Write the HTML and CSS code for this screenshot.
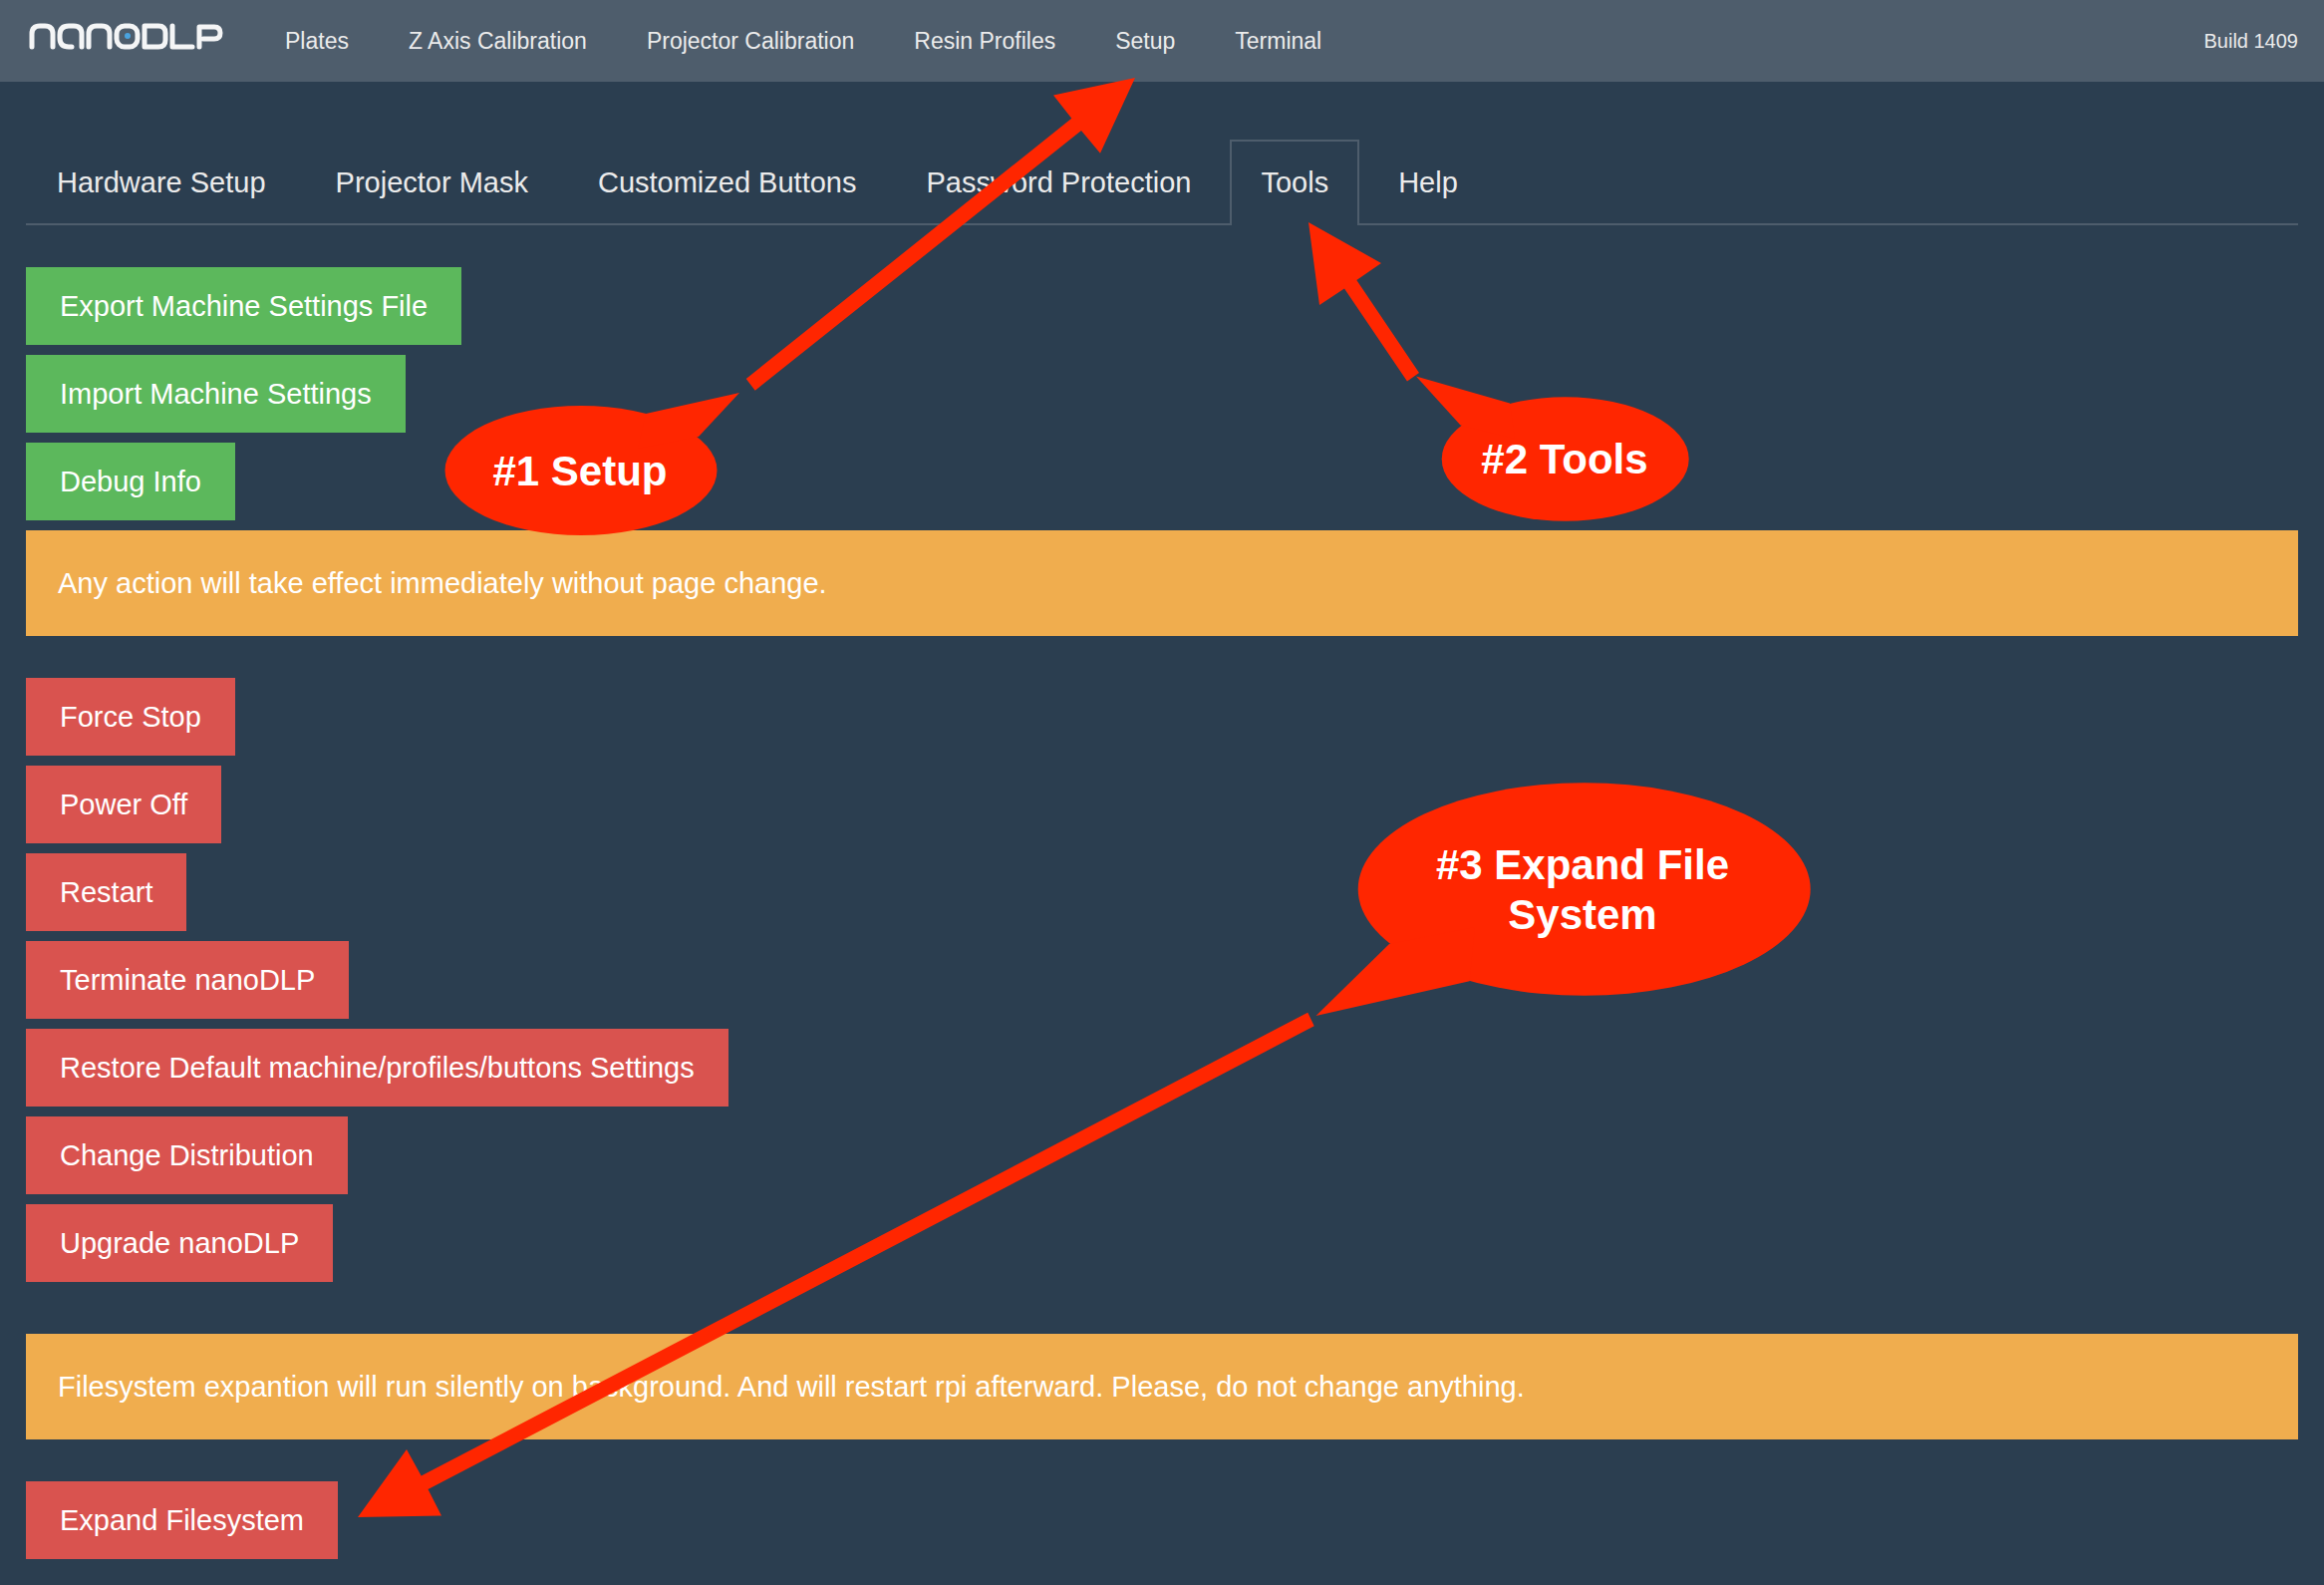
FILE: index.html
```html
<!DOCTYPE html>
<html lang="en">
<head>
<meta charset="utf-8">
<title>nanoDLP - Setup</title>
<link rel="stylesheet" href="styles.css">
</head>
<body>
<header class="navbar">
  <a class="brand" href="#" aria-label="nanoDLP">
    <svg class="brand-logo" viewBox="0 0 200 30" aria-hidden="true">
      <g class="brand-strokes">
        <path d="M6 25V12q0-8 8-8h5q8 0 8 8V25"/>
        <path d="M56 25V12q0-8-8-8h-5q-9 0-9 9v3q0 9 9 9h3"/>
        <path d="M63 25V12q0-8 8-8h5q8 0 8 8V25"/>
        <rect x="91" y="4" width="21" height="21" rx="8"/>
        <path d="M119 4h14q7 0 7 7v7q0 7-7 7h-14z"/>
        <path d="M147 4V25H167"/>
        <path d="M174 25V5H189q6 0 6 6t-6 6H178"/>
      </g>
      <circle class="brand-dot" cx="102" cy="14" r="3"/>
    </svg>
  </a>
  <nav class="menu">
    <a href="#">Plates</a>
    <a href="#">Z Axis Calibration</a>
    <a href="#">Projector Calibration</a>
    <a href="#">Resin Profiles</a>
    <a href="#">Setup</a>
    <a href="#">Terminal</a>
  </nav>
  <span class="build">Build 1409</span>
</header>

<main class="content">
  <nav class="tabs">
    <a class="tab" href="#">Hardware Setup</a>
    <a class="tab" href="#">Projector Mask</a>
    <a class="tab" href="#">Customized Buttons</a>
    <a class="tab" href="#">Password Protection</a>
    <a class="tab active" href="#">Tools</a>
    <a class="tab" href="#">Help</a>
  </nav>

  <div class="actions">
    <button class="btn success" type="button">Export Machine Settings File</button>
    <button class="btn success" type="button">Import Machine Settings</button>
    <button class="btn success" type="button">Debug Info</button>
  </div>

  <p class="alert">Any action will take effect immediately without page change.</p>

  <div class="actions danger-zone">
    <button class="btn danger" type="button">Force Stop</button>
    <button class="btn danger" type="button">Power Off</button>
    <button class="btn danger" type="button">Restart</button>
    <button class="btn danger" type="button">Terminate nanoDLP</button>
    <button class="btn danger" type="button">Restore Default machine/profiles/buttons Settings</button>
    <button class="btn danger" type="button">Change Distribution</button>
    <button class="btn danger" type="button">Upgrade nanoDLP</button>
  </div>

  <p class="alert">Filesystem expantion will run silently on background. And will restart rpi afterward. Please, do not change anything.</p>

  <div class="actions">
    <button class="btn danger" type="button">Expand Filesystem</button>
  </div>
</main>

<svg class="annotations" width="1900" height="1560" viewBox="0 0 1900 1560">
  <g class="marker">
    <!-- step 1: Setup menu entry -->
    <path d="M1139 78L1057 95.500L1075.300 118.700L748.700 380L757.700 391.700L1085 131L1104 153.700Z"/>
    <ellipse cx="583" cy="472" rx="136.500" ry="65"/>
    <path d="M648 415L742 394L701 438L640 450Z"/>
    <!-- step 2: Tools tab -->
    <path d="M1313 223L1386 264L1361.300 281L1424 374L1412 382.500L1349 289.500L1324 306Z"/>
    <ellipse cx="1570.700" cy="460.500" rx="124" ry="62.300"/>
    <path d="M1515 404.500L1421 377.500L1465.500 426.500L1520 440Z"/>
    <!-- step 3: Expand Filesystem button -->
    <path d="M359 1522L408 1454L422.700 1480.500L1312.300 1015.700L1318.700 1029.300L429.500 1494L443 1520.500Z"/>
    <ellipse cx="1589.700" cy="892" rx="227" ry="106.700"/>
    <path d="M1394 947L1320.500 1019L1474.600 984.300L1480 930Z"/>
  </g>
  <g class="marker-label">
    <text x="582" y="487">#1 Setup</text>
    <text x="1570" y="475">#2 Tools</text>
    <text x="1588" y="882">#3 Expand File</text>
    <text x="1588" y="932">System</text>
  </g>
</svg>
</body>
</html>
```
FILE: styles.css
```css
* {
  box-sizing: border-box;
}

body {
  position: relative;
  margin: 0;
  background: #2b3e50;
  color: #ebebeb;
  font-family: "Liberation Sans", Arial, sans-serif;
  font-size: 29px;
  line-height: 42px;
}

a {
  color: inherit;
  text-decoration: none;
}

.navbar {
  display: flex;
  align-items: center;
  min-height: 82px;
  padding: 0 26px;
  background: #4e5d6c;
}

.brand {
  display: block;
  width: 200px;
  margin-right: 30px;
}

.brand-logo {
  display: block;
  width: 200px;
  height: 30px;
  margin-bottom: 8px;
}

.brand-strokes {
  fill: none;
  stroke: #f4f5f6;
  stroke-width: 5;
  stroke-linecap: round;
  stroke-linejoin: round;
}

.brand-dot {
  fill: #4aa3df;
}

.menu {
  display: flex;
  flex: 1;
  gap: 60px;
  padding-left: 30px;
  font-size: 23px;
}

.build {
  font-size: 20px;
}

.content {
  padding: 58px 26px 26px;
}

.tabs {
  display: flex;
  gap: 8px;
  margin-bottom: 42px;
  border-bottom: 2px solid #4e5d6c;
}

.tab {
  margin-bottom: -2px;
  padding: 20px 29px;
  border: 2px solid transparent;
  border-bottom: 0;
}

.tab.active {
  padding-bottom: 22px;
  border-color: #4e5d6c;
  background: #2b3e50;
}

.actions {
  display: flex;
  flex-direction: column;
  align-items: flex-start;
  gap: 10px;
}

.btn {
  padding: 18px 34px;
  border: 0;
  color: #fff;
  font: inherit;
  cursor: pointer;
}

.success {
  background: #5cb85c;
}

.danger {
  background: #d9534f;
}

.alert {
  margin: 10px 0 42px;
  padding: 32px;
  background: #f0ad4e;
  color: #fff;
}

.danger-zone {
  margin-bottom: 52px;
}

.annotations {
  position: absolute;
  top: 0;
  left: 0;
  pointer-events: none;
}

.marker {
  fill: #ff2600;
}

.marker-label {
  fill: #fff;
  font-size: 42px;
  font-weight: 700;
  text-anchor: middle;
}
```
